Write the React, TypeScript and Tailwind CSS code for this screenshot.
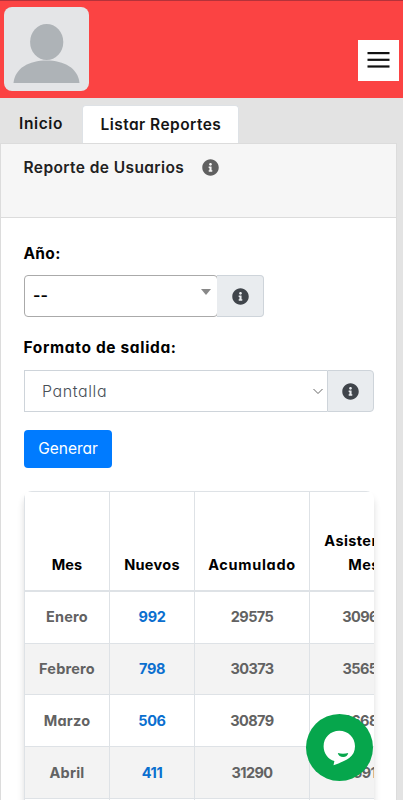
import { FaInfoCircle } from 'react-icons/fa'

const rows = [
  { mes: 'Enero', nuevos: '992', acumulado: '29575', asistencia: '30968' },
  { mes: 'Febrero', nuevos: '798', acumulado: '30373', asistencia: '35650' },
  { mes: 'Marzo', nuevos: '506', acumulado: '30879', asistencia: '36685' },
  { mes: 'Abril', nuevos: '411', acumulado: '31290', asistencia: '35912' },
  { mes: 'Mayo', nuevos: '602', acumulado: '31892', asistencia: '36120' },
]

const Header = () => {
  return (
    <header className="flex h-[98px] items-start justify-between border-t border-[#b5323a] bg-[#fb4343] pl-1 pr-1">
      <div className="mt-[6px] h-[84px] w-[85px] overflow-hidden rounded-lg bg-[#e4e5e7]">
        <svg width="85" height="84" viewBox="0 0 85 84" fill="#aeb3b7">
          <ellipse cx="42.7" cy="35" rx="16.6" ry="18" />
          <path d="M9.500 76C11 61 25 53.500 42.500 53.500S74 61 75.500 76Z" />
        </svg>
      </div>
      <button className="mt-[39px] flex h-[41px] w-[41px] items-center justify-center bg-white">
        <svg width="23" height="17" viewBox="0 0 23 17" fill="#111">
          <rect x="0.500" y="0" width="22" height="2.200" />
          <rect x="0.500" y="6.700" width="22" height="2.200" />
          <rect x="0.500" y="13.400" width="22" height="2.200" />
        </svg>
      </button>
    </header>
  )
}

const Tabs = () => {
  return (
    <nav className="flex h-[45px] items-end pt-[7px] text-[15.5px] font-semibold text-[#151515]">
      <a className="flex h-[38px] w-[82px] items-center pl-[19px]">
        <span className="tracking-[0.6px]">Inicio</span>
      </a>
      <a className="flex h-[38px] w-[157px] items-center rounded-t-[4px] border border-b-0 border-[#dee2e6] bg-white pl-[17.5px]">
        <span className="whitespace-nowrap tracking-[0.45px]">Listar Reportes</span>
      </a>
    </nav>
  )
}

const ReportTable = () => {
  return (
    <div className="mt-[23px] ml-[23px] h-[330px] w-[350px] overflow-hidden rounded-[8px] shadow-[0_6px_7px_rgba(0,0,0,0.14)]">
      <table className="w-[393px] table-fixed border-separate border-spacing-0 border-l border-t border-[#dee2e6] text-center text-[14.5px]">
        <colgroup>
          <col className="w-[85px]" />
          <col className="w-[85px]" />
          <col className="w-[115px]" />
          <col className="w-[107px]" />
        </colgroup>
        <thead>
          <tr className="h-[100px] align-bottom leading-6 text-black">
            <th className="border-r border-b-2 border-[#dee2e6] pb-[13px] font-bold">Mes</th>
            <th className="border-r border-b-2 border-[#dee2e6] pb-[13px] font-bold tracking-[0.3px]">Nuevos</th>
            <th className="border-r border-b-2 border-[#dee2e6] pb-[13px] font-bold tracking-[0.7px]">Acumulado</th>
            <th className="border-r border-b-2 border-[#dee2e6] pb-[13px] pl-[2px] font-bold tracking-[0.4px]">Asistencia<br />Mes</th>
          </tr>
        </thead>
        <tbody className="font-bold text-[#626262]">
          {rows.map((row) => (
            <tr key={row.mes} className="h-[51.7px] even:bg-[#f3f3f3]">
              <td className="border-r border-b border-[#dee2e6] tracking-[0.2px]">{row.mes}</td>
              <td className="border-r border-b border-[#dee2e6] tracking-[-0.4px] text-[#0b6fcf]">{row.nuevos}</td>
              <td className="border-r border-b border-[#dee2e6] tracking-[-0.6px]">{row.acumulado}</td>
              <td className="border-r border-b border-[#dee2e6] pl-[3px] tracking-[-0.6px]">{row.asistencia}</td>
            </tr>
          ))}
        </tbody>
      </table>
    </div>
  )
}

const ChatButton = () => {
  return (
    <button className="absolute left-[306px] top-[714px] h-[67px] w-[67px] rounded-full bg-[#06a64c]">
      <svg width="67" height="67" viewBox="0 0 67 67">
        <path d="M33.300 16.800c8.800 0 15.700 6.800 15.700 15.400 0 5-2 8.800-5.500 11.600-3.800 3-10.500 5.700-16 7.400l.9-4.100c-6.500-2-10.800-7.800-10.800-14.900 0-8.600 6.900-15.400 15.700-15.400Z" fill="#fff" />
        <path d="M31.800 39c3.400.9 7 .9 10.400 0-.5 2.400-2.300 4-5 4s-4.900-1.600-5.400-4Z" fill="#06a64c" />
      </svg>
    </button>
  )
}

const App = () => {
  return (
    <div className="relative h-[800px] w-[403px] overflow-hidden bg-[#e3e3e3] font-['Inter',sans-serif] [font-feature-settings:'cv11']">
      <Header />
      <Tabs />
      <main className="h-[657px] w-[397px] border border-b-0 border-[#dcdcdc] bg-white">
        <div className="flex h-[74px] items-start border-b border-[#dcdcdc] bg-[#f6f6f6] pl-[22.5px] pt-[12px]">
          <h1 className="w-[178px] whitespace-nowrap text-[15.5px] font-semibold leading-6 tracking-[0.4px] text-[#212121]">Reporte de Usuarios</h1>
          <FaInfoCircle className="mt-[3px] size-[17px] text-[#606060]" />
        </div>
        <label className="mt-[24px] ml-[22.5px] block text-[15.5px] font-bold leading-6 tracking-[0.3px] text-black">Año:</label>
        <div className="mt-[9px] ml-[23px] flex h-[42px] w-[240px]">
          <div className="flex w-[194px] justify-between rounded-[4px] border border-[#aaa] bg-white pl-[8px] pr-[6px]">
            <span className="pt-[7px] text-[16px] font-semibold text-black">--</span>
            <span className="mt-[13px] h-0 w-0 border-x-[5px] border-t-[6px] border-x-transparent border-t-[#888]" />
          </div>
          <div className="-ml-px flex flex-1 items-center justify-center rounded-r-[4px] border border-l-0 border-[#ced4da] bg-[#e9ecef]">
            <FaInfoCircle className="size-[17px] text-[#40454b]" />
          </div>
        </div>
        <label className="mt-[19px] ml-[22.5px] block text-[15.5px] font-bold leading-6 tracking-[0.65px] text-black">Formato de salida:</label>
        <div className="mt-[10px] ml-[23px] flex h-[42px] w-[350px]">
          <div className="flex w-[303px] items-center justify-between border border-r-0 border-[#ced4da] bg-white pl-[17px] pr-[4px]">
            <span className="text-[16px] font-light tracking-[0.6px] text-[#495057]">Pantalla</span>
            <svg width="10" height="7" viewBox="0 0 10 7" fill="none" stroke="#666">
              <path d="M.5 1 5 5.500 9.500 1" />
            </svg>
          </div>
          <div className="flex flex-1 items-center justify-center rounded-r-[4px] border border-[#ced4da] bg-[#e9ecef]">
            <FaInfoCircle className="size-[17px] text-[#40454b]" />
          </div>
        </div>
        <button className="mt-[18px] ml-[23px] flex h-[38px] w-[88px] items-center justify-center rounded-[4px] bg-[#007bff] text-[15.5px] text-white">Generar</button>
        <ReportTable />
      </main>
      <ChatButton />
    </div>
  )
}

export default App
